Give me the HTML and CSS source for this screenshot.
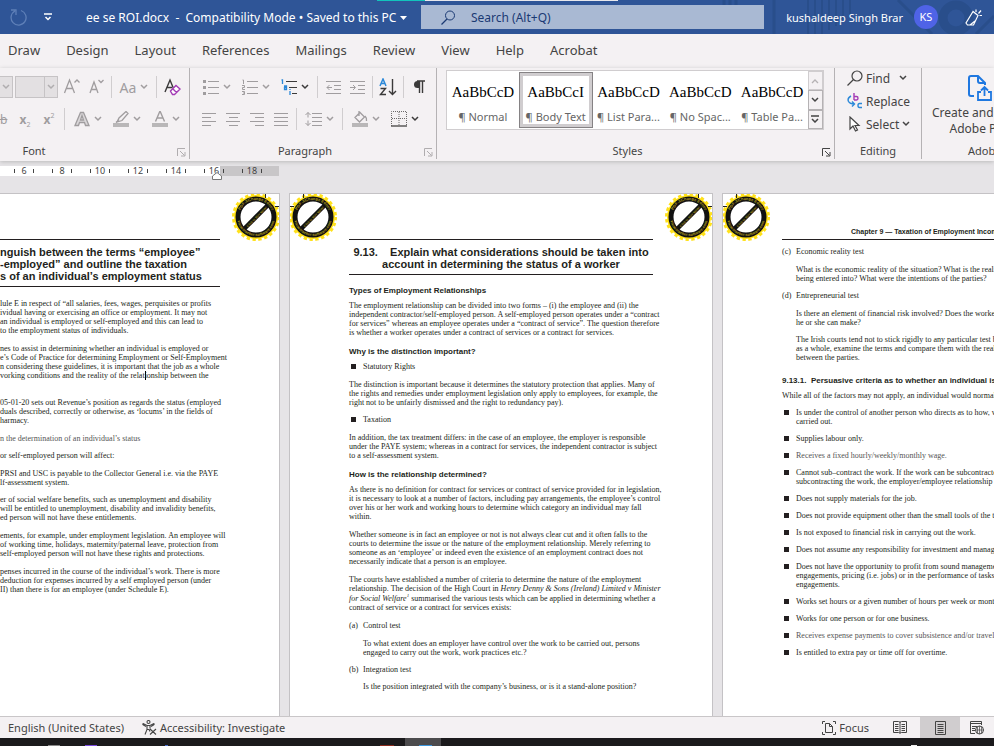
FILE: index.html
```html
<!DOCTYPE html>
<html lang="en">
<head>
  <meta charset="UTF-8">
  <meta name="viewport" content="width=device-width, initial-scale=1.0">
  <title>ee se ROI.docx</title>
  <link rel="stylesheet" href="styles.css">
</head>
<body>
  <!-- shared symbols -->
  <svg class="symbols" width="0" height="0" aria-hidden="true">
    <symbol id="chev" viewBox="0 0 8 6"><path d="M1 1l3 3 3-3" fill="none" stroke="currentColor" stroke-width="1.5"/></symbol>
    <symbol id="launcher" viewBox="0 0 9 9"><path d="M.5 8V.5H8M3 3l4.500 4.500M8 4v4H4" fill="none" stroke="currentColor"/></symbol>
    <symbol id="stamp" viewBox="0 0 48 48">
      <circle cx="24" cy="24" r="22" fill="#ffe11a"/>
      <circle cx="24" cy="24" r="22.500" fill="none" stroke="#ffe11a" stroke-width="3" stroke-dasharray="3.300 2.590"/>
      <circle cx="24" cy="24" r="18" fill="#fff" stroke="#111" stroke-width="5"/>
      <path d="M12 36L36 12" stroke="#111" stroke-width="4.500"/>
      <path id="arc-top" d="M7 24a17 17 0 0 1 34 0" fill="none"/>
      <path id="arc-low" d="M5 24a19 19 0 0 0 38 0" fill="none"/>
      <path id="bar" d="M14 36L37 13" fill="none"/>
      <g font-family="Liberation Sans, sans-serif" font-weight="bold" font-size="4" fill="#a8951c" text-anchor="middle">
        <text><textPath href="#arc-top" startOffset="50%">PDF-XChange Editor</textPath></text>
        <text><textPath href="#arc-low" startOffset="50%">www.tracker-software.com</textPath></text>
        <text font-size="3"><textPath href="#bar" startOffset="50%">Click to BUY NOW!</textPath></text>
      </g>
    </symbol>
  </svg>

  <header class="titlebar">
    <svg class="titlebar-art" width="280" height="34" viewBox="0 0 280 34" aria-hidden="true">
      <g fill="none" stroke="#294e8b">
        <path d="M10 0v20M16 0v24M22 0v26M60 0v34" stroke-width="3"/>
        <path d="M94 0v34M101 0v34M108 0v34M115 0v30M122 0v26M129 0v20M136 0v14" stroke-width="2"/>
        <circle cx="242" cy="18" r="13" stroke-width="9"/>
        <path d="M184 0l34 34M262 34l18-18" stroke-width="3"/>
      </g>
    </svg>
    <span class="top-strip"></span>
    <div class="quick">
      <button class="tb-btn dim" aria-label="Repeat"><svg width="18" height="18" viewBox="0 0 18 18"><path d="M11 2.500A7.500 7.500 0 1 1 5 3M1 2h5v5" fill="none" stroke="currentColor" stroke-width="1.300"/></svg></button>
      <button class="tb-btn" aria-label="Customize toolbar"><svg width="8" height="8" viewBox="0 0 8 8"><path d="M0 1h8M1.500 4L4 6.500 6.500 4" fill="none" stroke="currentColor" stroke-width="1.500"/></svg></button>
    </div>
    <button class="doc-title">ee se ROI.docx &nbsp;-&nbsp; Compatibility Mode • Saved to this PC
      <svg width="7" height="4" viewBox="0 0 7 4"><path d="M0 0h7L3.500 4z" fill="currentColor"/></svg></button>
    <label class="search">
      <svg width="15" height="15" viewBox="0 0 15 15"><circle cx="9" cy="5.500" r="4.500" fill="none" stroke="currentColor"/><path d="M6 9L.5 14.500" stroke="currentColor" stroke-width="1.300"/></svg>
      <input type="text" placeholder="Search (Alt+Q)" aria-label="Search">
    </label>
    <div class="account">
      <span>kushaldeep Singh Brar</span>
      <span class="avatar">KS</span>
      <button class="tb-btn pen" aria-label="Coming soon"><svg width="17" height="17" viewBox="0 0 17 17"><path d="M8 2.500L1 14l1.500 2h6L13 6.500zM5 16l5-4M8 2.500l5 4M11 3V.5M13.500 4.500L16 1.500M14.500 6.500H17" fill="none" stroke="currentColor" stroke-width="1.200"/></svg></button>
    </div>
  </header>

  <nav class="tabs">
    <a href="#">Draw</a>
    <a href="#">Design</a>
    <a href="#">Layout</a>
    <a href="#">References</a>
    <a href="#">Mailings</a>
    <a href="#">Review</a>
    <a href="#">View</a>
    <a href="#">Help</a>
    <a href="#">Acrobat</a>
  </nav>

  <section class="ribbon">
    <div class="group group-font">
      <div class="tools">
        <div class="row">
          <button class="combo combo-cut" aria-label="Font name"><svg class="chev"><use href="#chev"/></svg></button>
          <button class="combo" aria-label="Font size"><svg class="chev"><use href="#chev"/></svg></button>
          <button class="tool" aria-label="Grow font"><svg width="18" height="18" viewBox="0 0 18 18"><path d="M1.500 15L6.500 2l5 13M3.500 10.500h6.500M11.500 4.500L14 2l2.500 2.500" fill="none" stroke="currentColor" stroke-width="1.300"/></svg></button>
          <button class="tool" aria-label="Shrink font"><svg width="18" height="18" viewBox="0 0 18 18"><path d="M3 15L7 4l4 11M4.500 11.500h5M11.500 2L14 4.500 16.500 2" fill="none" stroke="currentColor" stroke-width="1.300"/></svg></button>
          <i class="sep"></i>
          <button class="tool split aa">Aa<svg class="chev"><use href="#chev"/></svg></button>
          <i class="sep"></i>
          <button class="tool on" aria-label="Clear formatting"><svg width="18" height="18" viewBox="0 0 18 18"><path d="M2 14L7 2l3.500 8.500M4 9.500h5" fill="none" stroke="currentColor" stroke-width="1.400"/><path d="M7.500 13L13 7.500l4 3.500-5.500 5.500H9.500zM10 11l3.500 3.500" fill="#fff" stroke="#a33bb5" stroke-width="1.400"/></svg></button>
        </div>
        <div class="row">
          <button class="tool strike">b</button>
          <button class="tool bold">x<sub>2</sub></button>
          <button class="tool bold">x<sup>2</sup></button>
          <i class="sep"></i>
          <button class="tool split" aria-label="Text effects"><svg width="16" height="16" viewBox="0 0 16 16"><path d="M1 14.500L6.500 1.500h3L15 14.500h-3.500l-1-3h-5l-1 3zM6.500 9h3L8 4.500z" fill="#dad7d9" stroke="currentColor" stroke-width="1.300"/></svg><svg class="chev"><use href="#chev"/></svg></button>
          <button class="tool split" aria-label="Highlight colour"><svg width="16" height="16" viewBox="0 0 16 16"><path d="M4 11l2-4 7-6.500 2 2L9 9.500zM3 11.500l3-3" fill="none" stroke="currentColor" stroke-width="1.300"/><path d="M0 12h16v4H0z" fill="#b9b7b8"/></svg><svg class="chev"><use href="#chev"/></svg></button>
          <button class="tool split" aria-label="Font colour"><svg width="16" height="16" viewBox="0 0 16 16"><path d="M3.500 10.500L8 0l4.500 10.500M5 7h6" fill="none" stroke="currentColor" stroke-width="1.400"/><path d="M0 12h16v4H0z" fill="#b9b7b8"/></svg><svg class="chev"><use href="#chev"/></svg></button>
        </div>
      </div>
      <div class="caption"><span>Font</span><button class="launch" aria-label="Font settings"><svg><use href="#launcher"/></svg></button></div>
    </div>

    <div class="group group-para">
      <div class="tools">
        <div class="row">
          <button class="tool split" aria-label="Bullets"><svg width="16" height="16" viewBox="0 0 16 16"><path d="M0 1h3v3H0zM0 7h3v3H0zM0 13h3v3H0z" fill="currentColor"/><path d="M5 2.500h11M5 8.500h11M5 14.500h11" stroke="currentColor"/></svg><svg class="chev"><use href="#chev"/></svg></button>
          <button class="tool split" aria-label="Numbering"><svg width="16" height="16" viewBox="0 0 16 16"><path d="M5 2.500h11M5 8.500h11M5 14.500h11M.5 1h1v4M0 6.500h2.500v2H.5v2H3M0 12.500h2.500v3H0M1 14h1.500" fill="none" stroke="currentColor"/></svg><svg class="chev"><use href="#chev"/></svg></button>
          <button class="tool split on" aria-label="Multilevel list"><svg width="16" height="16" viewBox="0 0 16 16"><path d="M5 2.500h11M8 8.500h8M11 14.500h5" stroke="currentColor"/><path d="M.5 1h1v4M3 7h2.500v3.500H3.500v-2h2M9 12v4M9 10v1" fill="none" stroke="#2b88d8" stroke-width="1.300"/></svg><svg class="chev"><use href="#chev"/></svg></button>
          <i class="sep"></i>
          <button class="tool" aria-label="Decrease indent"><svg width="15" height="14" viewBox="0 0 15 14"><path d="M0 1.500h15M8 5.500h7M8 9.500h7M0 13.500h15M6 7.500H1M3.500 5L1 7.500 3.500 10" fill="none" stroke="currentColor"/></svg></button>
          <button class="tool" aria-label="Increase indent"><svg width="15" height="14" viewBox="0 0 15 14"><path d="M0 1.500h15M8 5.500h7M8 9.500h7M0 13.500h15M0 7.500h5M3 5l2.500 2.500L3 10" fill="none" stroke="currentColor"/></svg></button>
          <i class="sep"></i>
          <button class="tool on" aria-label="Sort"><svg width="18" height="18" viewBox="0 0 18 18"><path d="M1 8l3-7 3 7M2 5.500h4" fill="none" stroke="#2b88d8" stroke-width="1.500"/><path d="M1.500 10.500h5l-5 6H7M13.500 1v15.500M10 13l3.500 3.500L17 13" fill="none" stroke="currentColor" stroke-width="1.400"/></svg></button>
          <i class="sep"></i>
          <button class="tool on" aria-label="Show marks"><svg width="12" height="14" viewBox="0 0 12 14"><path d="M6 8H4.500a3.500 3.500 0 0 1 0-7H6z" fill="currentColor"/><path d="M4 1h8M6.500 1v12M9.500 1v12" fill="none" stroke="currentColor" stroke-width="1.400"/></svg></button>
        </div>
        <div class="row">
          <button class="tool" aria-label="Align left"><svg width="15" height="14" viewBox="0 0 15 14"><path d="M0 1.500h14M0 5.500h9M0 9.500h14M0 13.500h9" stroke="currentColor"/></svg></button>
          <button class="tool" aria-label="Centre"><svg width="15" height="14" viewBox="0 0 15 14"><path d="M0 1.500h14M3 5.500h9M0 9.500h14M3 13.500h9" stroke="currentColor"/></svg></button>
          <button class="tool" aria-label="Align right"><svg width="15" height="14" viewBox="0 0 15 14"><path d="M0 1.500h14M5 5.500h9M0 9.500h14M5 13.500h9" stroke="currentColor"/></svg></button>
          <button class="tool" aria-label="Justify"><svg width="15" height="14" viewBox="0 0 15 14"><path d="M0 1.500h14M0 5.500h14M0 9.500h14M0 13.500h14" stroke="currentColor"/></svg></button>
          <i class="sep"></i>
          <button class="tool split" aria-label="Line spacing"><svg width="17" height="16" viewBox="0 0 17 16"><path d="M7 2.500h10M7 6.500h10M7 10.500h10M7 14.500h10M3 1.500v5M3 9.500v5M.5 4L3 1.500 5.500 4M.5 12L3 14.500 5.500 12" fill="none" stroke="currentColor"/></svg><svg class="chev"><use href="#chev"/></svg></button>
          <i class="sep"></i>
          <button class="tool split" aria-label="Shading"><svg width="16" height="16" viewBox="0 0 16 16"><path d="M3 6.500L8 1.500l4.500 4.500L7.500 11zM7 0v5M13 5q2 2 1.500 5" fill="none" stroke="currentColor" stroke-width="1.300"/><path d="M0 12h16v4H0z" fill="#b9b7b8"/></svg><svg class="chev"><use href="#chev"/></svg></button>
          <button class="tool split on" aria-label="Borders"><svg width="16" height="16" viewBox="0 0 16 16"><path d="M.5 15V.5h15V15M8 1v13M1 7.500h14" fill="none" stroke="#6b6969" stroke-dasharray="1 1"/><path d="M0 15h16" stroke="#5b5959" stroke-width="1.500"/></svg><svg class="chev"><use href="#chev"/></svg></button>
        </div>
      </div>
      <div class="caption"><span>Paragraph</span><button class="launch" aria-label="Paragraph settings"><svg><use href="#launcher"/></svg></button></div>
    </div>

    <div class="group group-styles">
      <div class="gallery">
        <button class="style"><b>AaBbCcD</b><span>¶ Normal</span></button>
        <button class="style selected"><b>AaBbCcI</b><span>¶ Body Text</span></button>
        <button class="style"><b>AaBbCcD</b><span>¶ List Para...</span></button>
        <button class="style"><b>AaBbCcD</b><span>¶ No Spac...</span></button>
        <button class="style"><b>AaBbCcD</b><span>¶ Table Pa...</span></button>
        <div class="scroller">
          <button class="off" aria-label="Up"><svg width="8" height="6" viewBox="0 0 8 6"><path d="M1 5l3-3 3 3" fill="none" stroke="currentColor" stroke-width="1.300"/></svg></button>
          <button aria-label="Down"><svg class="chev"><use href="#chev"/></svg></button>
          <button aria-label="More styles"><svg width="8" height="8" viewBox="0 0 8 8"><path d="M0 1h8M1 4l3 3 3-3" fill="none" stroke="currentColor" stroke-width="1.500"/></svg></button>
        </div>
      </div>
      <div class="caption"><span>Styles</span><button class="launch on" aria-label="Styles pane"><svg><use href="#launcher"/></svg></button></div>
    </div>

    <div class="group group-edit">
      <div class="edit-list">
        <button><svg width="16" height="16" viewBox="0 0 16 16"><circle cx="10" cy="6" r="5" fill="none" stroke="currentColor" stroke-width="1.200"/><path d="M6.500 9.500L.5 15.500" stroke="currentColor" stroke-width="1.300"/></svg>Find<svg class="chev far"><use href="#chev"/></svg></button>
        <button><svg width="16" height="16" viewBox="0 0 16 16"><path d="M7 0v7M7 3.500h2.500q1.500 0 1.500 1.700T9.500 7H7" fill="none" stroke="#a33bb5" stroke-width="1.400"/><path d="M15 10.500h-2.500q-1.500 0-1.500 2t1.500 2H15M4 3Q0 5 1.500 8.500 3 11 7 11M5 8.500L7.500 11 5 13.500" fill="none" stroke="#2b88d8" stroke-width="1.400"/></svg>Replace</button>
        <button><svg width="16" height="16" viewBox="0 0 16 16"><path d="M3 1v12l3-3 2.500 5 2-1-2.500-4.500h4z" fill="#fff" stroke="currentColor" stroke-width="1.200"/></svg>Select<svg class="chev"><use href="#chev"/></svg></button>
      </div>
      <div class="caption"><span>Editing</span></div>
    </div>

    <div class="group group-adobe">
      <button class="adobe-btn">
        <svg width="24" height="26" viewBox="0 0 24 26"><path d="M6 21H3q-2 0-2-2V3q0-2 2-2h7l7 7v2M10 1v5q0 2 2 2h5" fill="none" stroke="#1f78e0" stroke-width="2"/><path d="M13 17h-3v8h13v-8h-3M16.500 21v-8M13 15.500l3.500-3.500 3.500 3.500" fill="none" stroke="#1f78e0" stroke-width="1.800"/></svg>
        <span>Create and Share</span>
        <span>Adobe PDF</span>
      </button>
      <div class="caption"><span>Adobe Acrobat</span></div>
    </div>
  </section>

  <div class="ruler">
    <div class="ruler-strip">
      <span>6</span><span>8</span><span>10</span><span>12</span><span>14</span><span>16</span><span>18</span>
      <svg class="indent" width="10" height="8" viewBox="0 0 10 8"><path d="M.5 7.500V4L5 .5 9.500 4v3.500z" fill="#fff" stroke="#777"/></svg>
    </div>
  </div>

  <main class="pages">
    <article class="page page-left">
      <svg class="stamp right"><use href="#stamp"/></svg><i class="crop right"></i>
      <h2>nguish between the terms “employee”<br>-employed” and outline the taxation<br>s of an individual’s employment status</h2>
      <p>lule E in respect of “all salaries, fees, wages, perquisites or profits<br>ividual having or exercising an office or employment. It may not<br>an individual is employed or self-employed and this can lead to<br>to the employment status of individuals.</p>
      <p class="blank">nes to assist in determining whether an individual is employed or<br>e’s Code of Practice for determining Employment or Self-Employment<br>n considering these guidelines, it is important that the job as a whole<br>vorking conditions and the reality of the relat<i class="cursor"></i>ionship between the</p>
      <p>05-01-20 sets out Revenue’s position as regards the status (employed<br>duals described, correctly or otherwise, as ‘locums’ in the fields of<br>harmacy.</p>
      <p class="light tight">n the determination of an individual’s status</p>
      <p>or self-employed person will affect:</p>
      <p class="tight">PRSI and USC is payable to the Collector General i.e. via the PAYE<br>lf-assessment system.</p>
      <p>er of social welfare benefits, such as unemployment and disability<br>will be entitled to unemployment, disability and invalidity benefits,<br>ed person will not have these entitlements.</p>
      <p>ements, for example, under employment legislation. An employee will<br>of working time, holidays, maternity/paternal leave, protection from<br>self-employed person will not have these rights and protections.</p>
      <p>penses incurred in the course of the individual’s work. There is more<br>deduction for expenses incurred by a self employed person (under<br>II) than there is for an employee (under Schedule E).</p>
    </article>

    <article class="page page-mid">
      <svg class="stamp left"><use href="#stamp"/></svg><i class="crop left"></i>
      <svg class="stamp right"><use href="#stamp"/></svg><i class="crop right"></i>
      <h2>9.13. &nbsp;&nbsp; Explain what considerations should be taken into<br>account in determining the status of a worker</h2>
      <h3>Types of Employment Relationships</h3>
      <p class="tight">The employment relationship can be divided into two forms – (i) the employee and (ii) the<br>independent contractor/self-employed person. A self-employed person operates under a “contract<br>for services” whereas an employee operates under a “contract of service”. The question therefore<br>is whether a worker operates under a contract of services or a contract for services.</p>
      <h3>Why is the distinction important?</h3>
      <ul><li>Statutory Rights</li></ul>
      <p class="tight">The distinction is important because it determines the statutory protection that applies. Many of<br>the rights and remedies under employment legislation only apply to employees, for example, the<br>right not to be unfairly dismissed and the right to redundancy pay).</p>
      <ul><li>Taxation</li></ul>
      <p class="tight">In addition, the tax treatment differs: in the case of an employee, the employer is responsible<br>under the PAYE system; whereas in a contract for services, the independent contractor is subject<br>to a self-assessment system.</p>
      <h3>How is the relationship determined?</h3>
      <p>As there is no definition for contract for services or contract of service provided for in legislation,<br>it is necessary to look at a number of factors, including pay arrangements, the employee’s control<br>over his or her work and working hours to determine which category an individual may fall<br>within.</p>
      <p>Whether someone is in fact an employee or not is not always clear cut and it often falls to the<br>courts to determine the issue or the nature of the employment relationship. Merely referring to<br>someone as an ‘employee’ or indeed even the existence of an employment contract does not<br>necessarily indicate that a person is an employee.</p>
      <p>The courts have established a number of criteria to determine the nature of the employment<br>relationship. The decision of the High Court in <em>Henry Denny &amp; Sons (Ireland) Limited v Minister<br>for Social Welfare<sup>1</sup></em> summarised the various tests which can be applied in determining whether a<br>contract of service or a contract for services exists:</p>
      <dl>
        <dt>(a)</dt><dd>Control test</dd>
        <dd class="tight">To what extent does an employer have control over the work to be carried out, persons<br>engaged to carry out the work, work practices etc.?</dd>
        <dt>(b)</dt><dd class="tight">Integration test</dd>
        <dd>Is the position integrated with the company’s business, or is it a stand-alone position?</dd>
      </dl>
    </article>

    <article class="page page-right">
      <svg class="stamp left"><use href="#stamp"/></svg><i class="crop left"></i>
      <div class="running">Chapter 9 — Taxation of Employment Income: Schedule E</div>
      <dl>
        <dt>(c)</dt><dd>Economic reality test</dd>
        <dd class="tight">What is the economic reality of the situation? What is the reality of the contract<br>being entered into? What were the intentions of the parties?</dd>
        <dt>(d)</dt><dd>Entrepreneurial test</dd>
        <dd class="tight">Is there an element of financial risk involved? Does the worker have a say in how much<br>he or she can make?</dd>
        <dd class="last">The Irish courts tend not to stick rigidly to any particular test but look at the contract<br>as a whole, examine the terms and compare them with the reality of the relationship<br>between the parties.</dd>
      </dl>
      <h3>9.13.1.&nbsp; Persuasive criteria as to whether an individual is an employee</h3>
      <p class="tight">While all of the factors may not apply, an individual would normally be an employee if:</p>
      <ul class="criteria">
        <li>Is under the control of another person who directs as to how, when and where<br>carried out.</li>
        <li>Supplies labour only.</li>
        <li class="light">Receives a fixed hourly/weekly/monthly wage.</li>
        <li>Cannot sub–contract the work. If the work can be subcontracted and the person<br>subcontracting the work, the employer/employee relationship may simply</li>
        <li>Does not supply materials for the job.</li>
        <li>Does not provide equipment other than the small tools of the trade.</li>
        <li>Is not exposed to financial risk in carrying out the work.</li>
        <li>Does not assume any responsibility for investment and management</li>
        <li>Does not have the opportunity to profit from sound management<br>engagements, pricing (i.e. jobs) or in the performance of tasks as part of<br>engagements.</li>
        <li>Works set hours or a given number of hours per week or month.</li>
        <li>Works for one person or for one business.</li>
        <li class="light">Receives expense payments to cover subsistence and/or travel expenses.</li>
        <li>Is entitled to extra pay or time off for overtime.</li>
      </ul>
    </article>
  </main>

  <footer class="status">
    <button>English (United States)</button>
    <button class="access"><svg width="15" height="15" viewBox="0 0 15 15"><g fill="none" stroke="currentColor" stroke-width="1.100"><circle cx="6.500" cy="2" r="1.500"/><path d="M1 3.500l4 2h3l4-2M5 5.500v4l-2 5M8 5.500v3M1 3.500q-.5 1 .5 1.500L4 6.500M12 3.500q.5 1-.5 1.500L9 6.500M5 9.500h2l1 2M8 9l6 5.500M14 9l-6 5.500"/></g></svg>Accessibility: Investigate</button>
    <button class="focus"><svg width="14" height="14" viewBox="0 0 14 14"><path d="M3 .5H.5V3M11 .5h2.500V3M3 13.500H.5V11M11 13.500h2.500V11M3.500 2.500h4l3 3v6h-7zM7.500 2.500v3h3" fill="none" stroke="currentColor"/></svg>Focus</button>
    <button class="view" aria-label="Read mode"><svg width="14" height="13" viewBox="0 0 14 13"><path d="M.5.500h5q1.500 0 1.500 1 0-1 1.500-1h5v11h-5q-1.500 0-1.500 1 0-1-1.500-1h-5zM7 1v11M2 3.500h3.500M2 5.500h3.500M2 7.500h3.500M2 9.500h3.500M8.500 3.500H12M8.500 5.500H12M8.500 7.500H12M8.500 9.500H12" fill="none" stroke="currentColor"/></svg></button>
    <button class="view active" aria-label="Print layout"><svg width="11" height="14" viewBox="0 0 11 14"><path d="M.5.500h10v13H.5zM2.500 3.500h6M2.500 5.500h6M2.500 7.500h6M2.500 9.500h6M2.500 11.500h6" fill="none" stroke="currentColor"/></svg></button>
    <button class="view" aria-label="Web layout"><svg width="14" height="14" viewBox="0 0 14 14"><path d="M5 12.500H.5V.5h11V4M0 2.500h12M2 5.500h5M2 7.500h3M2 9.500h3" fill="none" stroke="currentColor"/><circle cx="9.500" cy="9" r="4" fill="#f4f1f3" stroke="currentColor"/><path d="M5.500 9h8M9.500 5v8M7.500 6v6M11.500 6v6" stroke="currentColor" stroke-width=".7"/></svg></button>
  </footer>
  <div class="taskbar">
    <svg width="994" height="8" viewBox="0 0 994 8" aria-hidden="true">
      <path d="M405 0h36v8h-36z" fill="#4c4b4d"/>
      <path d="M48 7h12v1H48z" fill="#888"/><path d="M85 7h12v1H85z" fill="#7a4be0"/>
      <path d="M165 7h3v1h-3z" fill="#4a70d0"/><path d="M380 7h14v1h-14z" fill="#8a2a1c"/>
      <path d="M419 7h13v1h-13z" fill="#3b96dd"/><path d="M911 7h6v1h-6z" fill="#eee"/>
    </svg>
  </div>
</body>
</html>
```
FILE: styles.css
```css
* {
  box-sizing: border-box;
}

body {
  margin: 0;
  height: 100vh;
  display: flex;
  flex-direction: column;
  overflow: hidden;
  font-family: "Noto Sans", "Open Sans", sans-serif;
  font-size: 12px;
  color: #444;
  background: #e6e4e7;
}

button {
  font: inherit;
  color: inherit;
  background: none;
  border: none;
  padding: 0;
  white-space: nowrap;
}

svg {
  flex: none;
}

.symbols {
  position: absolute;
}

.chev {
  width: 8px;
  height: 6px;
}

/* title bar */
.titlebar {
  position: relative;
  flex: none;
  display: flex;
  align-items: center;
  height: 34px;
  color: #fff;
  background: #2f5597;
}

.titlebar-art {
  position: absolute;
  top: 0;
  right: 0;
}

.top-strip {
  position: absolute;
  top: 0;
  left: 377px;
  width: 241px;
  height: 1px;
  background: linear-gradient(to right, #12c4bc 48px, #e8e8ec 48px);
}

.quick {
  display: flex;
  gap: 16px;
  width: 86px;
  padding-left: 10px;
}

.tb-btn {
  display: flex;
  align-items: center;
}

.tb-btn.dim {
  color: #5f80b8;
}

.doc-title {
  width: 335px;
  text-align: left;
}

.doc-title svg {
  margin-left: 1px;
  vertical-align: middle;
}

.search {
  position: relative;
  flex: 1;
  display: flex;
  align-items: center;
  gap: 15px;
  height: 24px;
  padding-left: 20px;
  color: #1b3a73;
  background: #a9b9d3;
}

.search input {
  flex: 1;
  min-width: 0;
  border: none;
  outline: none;
  background: none;
  padding: 0;
  font: inherit;
  color: inherit;
}

.search input::placeholder {
  color: #1b3a73;
  opacity: 1;
}

.account {
  position: relative;
  display: flex;
  align-items: center;
  justify-content: flex-end;
  gap: 11px;
  width: 230px;
  padding-right: 12px;
  font-size: 11px;
  white-space: nowrap;
}

.avatar {
  width: 24px;
  height: 24px;
  border-radius: 50%;
  line-height: 24px;
  text-align: center;
  font-size: 11px;
  background: #4f63e6;
}

.pen {
  margin-left: 16px;
}

/* tabs */
.tabs {
  flex: none;
  display: flex;
  gap: 26px;
  height: 34px;
  padding: 0 8px;
  line-height: 32px;
  font-size: 13px;
  background: #f4f1f3;
}

.tabs a {
  color: #444;
  text-decoration: none;
}

/* ribbon */
.ribbon {
  position: relative;
  flex: none;
  display: flex;
  height: 93px;
  padding-bottom: 2px;
  background: #f4f1f3;
  box-shadow: 0 1px 4px #bbb;
}

.group {
  flex: none;
  display: flex;
  flex-direction: column;
  justify-content: space-between;
  border-right: 1px solid #b5b2b4;
}

.group-font {
  width: 190px;
}

.group-para {
  width: 247px;
}

.group-styles {
  flex: 1;
  min-width: 0;
  padding-top: 2px;
}

.group-edit {
  width: 87px;
}

.group-adobe {
  width: 72px;
  border-right: none;
  overflow: hidden;
}

.tools {
  display: flex;
  flex-direction: column;
  gap: 8px;
  padding-top: 7px;
}

.group-para .tools {
  padding-left: 7px;
}

.row {
  display: flex;
  align-items: center;
  height: 24px;
}

.tool {
  display: flex;
  align-items: center;
  justify-content: center;
  width: 24px;
  height: 24px;
  color: #a09d9f;
}

.tool.split {
  width: 39px;
  gap: 4px;
}

.tool.on {
  color: #3b3a3a;
}

.tool.aa {
  font-size: 14px;
  width: 38px;
}

.tool.bold {
  font-weight: bold;
}

.tool sub,
.tool sup {
  font-size: 7px;
  line-height: 7px;
  font-weight: normal;
}

.tool sub {
  padding-top: 10px;
}

.tool sup {
  padding-bottom: 8px;
}

.tool.strike {
  width: 13px;
  justify-content: flex-start;
  text-decoration: line-through;
}

.combo {
  display: flex;
  align-items: center;
  justify-content: flex-end;
  width: 43px;
  height: 22px;
  margin-right: 2px;
  padding-right: 2px;
  color: #b0adaf;
  background: linear-gradient(to left, transparent 12px, #c6c3c5 12px, #c6c3c5 13px, transparent 13px) #e3e0e2;
  border: 1px solid #c6c3c5;
}

.combo-cut {
  width: 13px;
  border-left: none;
}

.sep {
  width: 1px;
  height: 22px;
  margin: 0 3px;
  background: #d0cdcf;
}

.caption {
  position: relative;
  height: 16px;
  line-height: 16px;
  text-align: center;
  font-size: 11px;
}

.group-font .caption {
  padding-right: 121px;
}

.group-para .caption,
.group-styles .caption {
  padding-right: 16px;
}

.group-adobe .caption {
  text-align: left;
  padding-left: 46px;
  white-space: nowrap;
}

.launch {
  position: absolute;
  right: 3px;
  bottom: 2px;
  height: 9px;
  color: #b0adaf;
}

.launch svg {
  display: block;
  width: 9px;
  height: 9px;
}

.launch.on {
  color: #444;
}

.gallery {
  display: flex;
  height: 60px;
  margin: 0 10px 0 9px;
  border: 1px solid #d0cdcf;
  background: #fff;
}

.style {
  flex: 1;
  min-width: 0;
  display: flex;
  flex-direction: column;
  align-items: center;
  justify-content: flex-end;
  gap: 6px;
  padding-bottom: 3px;
  overflow: hidden;
  color: #666;
}

.style b {
  font: 15px/20px "Liberation Serif", serif;
  color: #000;
}

.style span {
  font-size: 11px;
  line-height: 18px;
}

.style.selected {
  margin: 1px 0;
  padding-bottom: 1px;
  border: 1px solid #858284;
  box-shadow: inset 0 0 0 3px #d0cdcf;
}

.scroller {
  display: flex;
  flex-direction: column;
  width: 15px;
}

.scroller button {
  flex: 1;
  display: flex;
  align-items: center;
  justify-content: center;
  border: 1px solid #b5b2b4;
  background: #f4f1f3;
}

.scroller .off {
  color: #b5b2b4;
  border-color: #d0cdcf;
}

.edit-list {
  display: flex;
  flex-direction: column;
  gap: 7px;
  padding: 2px 0 0 12px;
}

.edit-list button {
  display: flex;
  align-items: center;
  gap: 3px;
  height: 16px;
}

.edit-list .far {
  margin-left: 6px;
}

.adobe-btn {
  display: flex;
  flex-direction: column;
  align-items: center;
  align-self: flex-start;
  padding: 7px 0 0 10px;
  line-height: 16px;
}

.adobe-btn svg {
  margin-bottom: 4px;
}

/* ruler */
.ruler {
  flex: none;
  height: 32px;
  padding-top: 5px;
}

.ruler-strip {
  position: relative;
  display: flex;
  width: 279px;
  height: 10px;
  padding-left: 5px;
  line-height: 10px;
  font-size: 9px;
  background: linear-gradient(to right, #fff 220px, #c8c6c8 220px);
}

.ruler-strip span {
  display: flex;
  flex: none;
  align-items: center;
  justify-content: space-between;
  width: 38px;
  padding: 0 9px;
}

.ruler-strip span::before,
.ruler-strip span::after {
  content: "";
  width: 1px;
  height: 4px;
  background: #444;
}

.indent {
  position: absolute;
  left: 212px;
  top: 6px;
}

/* document */
.pages {
  flex: 1;
  min-height: 0;
  display: grid;
  grid-template-columns: 280fr 424fr 272fr;
  gap: 9px;
  overflow: hidden;
}

.page {
  position: relative;
  min-width: 0;
  padding: 45px 59px 0;
  border: 1px solid #c4c2c5;
  border-bottom: none;
  overflow: hidden;
  white-space: nowrap;
  font: 8px/9px "Liberation Serif", serif;
  color: #231f20;
  background: #fff;
}

.page-left {
  padding-left: 0;
  border-left: none;
}

.page-right {
  padding-right: 0;
  border-right: none;
}

.page h2 {
  margin: 0 0 9px;
  padding: 6px 0 4px;
  border: solid #231f20;
  border-width: 1px 0;
  text-align: center;
  font: bold 11px/12px "Liberation Sans", sans-serif;
}

.page-left h2 {
  margin-bottom: 12px;
  text-align: left;
}

.page h3 {
  margin: 0 0 4px;
  font: bold 8px/13px "Liberation Sans", sans-serif;
}

.page p {
  margin: 0 0 9px;
}

.page .tight {
  margin-bottom: 8px;
}

.page .blank {
  margin-bottom: 18px;
}

.page .light {
  color: #555;
}

.page sup {
  font-size: 5px;
  line-height: 5px;
}

.page ul {
  list-style: none;
  margin: 0 0 9px;
  padding: 0;
}

.page li {
  position: relative;
  padding-left: 14px;
}

.page li::before {
  content: "";
  position: absolute;
  left: 2px;
  top: 2px;
  width: 5px;
  height: 5px;
  background: #231f20;
}

.criteria li {
  margin-bottom: 8px;
}

.page dl {
  display: grid;
  grid-template-columns: 14px 1fr;
  margin: 0;
}

.page dd {
  grid-column: 2;
  margin: 0 0 9px;
}

.page dd.last {
  margin-bottom: 12px;
}

.running {
  height: 14px;
  margin: -14px 0 7px;
  padding-left: 69px;
  box-sizing: content-box;
  border-bottom: 1px solid #231f20;
  font: bold 7px/14px "Liberation Sans", sans-serif;
}

.cursor {
  display: inline-block;
  width: 1px;
  height: 9px;
  margin-right: -1px;
  vertical-align: bottom;
  background: #000;
}

.stamp {
  position: absolute;
  top: -1px;
  width: 48px;
  height: 48px;
}

.stamp.left {
  left: -1px;
}

.stamp.right {
  right: -1px;
}

.crop {
  position: absolute;
  top: 0;
  width: 14px;
  height: 13px;
  background: linear-gradient(#222, #222) no-repeat, linear-gradient(#222, #222) no-repeat;
}

.crop.left {
  left: 0;
  background-size: 1px 4px, 4px 1px;
  background-position: right top, left bottom;
}

.crop.right {
  right: 0;
  background-size: 1px 4px, 4px 1px;
  background-position: left top, right bottom;
}

/* status bar */
.status {
  flex: none;
  display: flex;
  align-items: center;
  height: 22px;
  padding-left: 8px;
  font-size: 11px;
  background: #f4f1f3;
  border-top: 1px solid #c9c6c8;
}

.status button {
  display: flex;
  align-items: center;
  gap: 3px;
}

.status .access {
  margin-left: 18px;
}

.status .focus {
  margin-left: auto;
  margin-right: 11px;
}

.status .view {
  justify-content: center;
  width: 40px;
  height: 21px;
}

.status .view:last-child {
  width: 34px;
}

.status .active {
  background: #d0cdcf;
}

.taskbar {
  flex: none;
  height: 8px;
  background: #1b1a1c;
  overflow: hidden;
}

.taskbar svg {
  display: block;
}
```
